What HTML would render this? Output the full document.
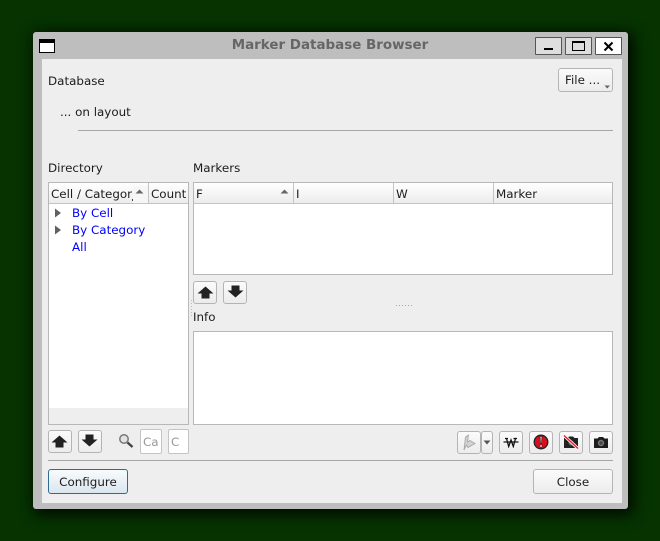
<!DOCTYPE html>
<html><head><meta charset="utf-8">
<style>
html,body{margin:0;padding:0;width:660px;height:541px;overflow:hidden;background:#063300}
*{box-sizing:border-box}
body{font-family:"DejaVu Sans",sans-serif;font-size:11.9px;color:#1c1c1c;position:relative}
.a{position:absolute;white-space:nowrap}
.win{position:absolute;left:33px;top:32px;width:595px;height:477px;background:#bebebe;border-radius:3px;box-shadow:3px 3px 14px 3px rgba(0,0,0,.75)}
.content{position:absolute;left:42px;top:59px;width:580px;height:444px;background:#eeeeee}
.btn{position:absolute;border:1px solid #b4b4b4;border-radius:3px;background:linear-gradient(#fbfbfb,#ececec);text-align:center}
.tb{position:absolute;top:4px;height:18px;border:1px solid #555;border-radius:1px}
.box{position:absolute;background:#fff;border:1px solid #b8b8b8}
.hd{position:absolute;top:0;height:21px;background:linear-gradient(#fff,#ececec);border-right:1px solid #c4c4c4;border-bottom:1px solid #c4c4c4;line-height:22px;padding-left:2px;overflow:hidden;white-space:nowrap}
.lnk{position:absolute;color:#0000ff;left:72px;line-height:17px;white-space:nowrap}
svg{position:absolute;display:block}
</style></head>
<body>
<div class="win"></div>
<div class="content"></div>

<div class="a" style="left:39px;top:39px;width:16px;height:14px;background:#fff;border:1px solid #000;border-top:4px solid #000"></div>
<div class="a" style="left:33px;top:37px;width:595px;text-align:center;font:bold 13.45px 'DejaVu Sans',sans-serif;color:#666;line-height:17px;text-indent:-1px">Marker Database Browser</div>
<div class="tb" style="left:535px;top:37px;width:27px;height:18px;background:#dedede"></div>
<div class="a" style="left:544px;top:48px;width:9px;height:2px;background:#000"></div>
<div class="tb" style="left:565px;top:37px;width:27px;height:18px;background:#dedede"></div>
<div class="a" style="left:572px;top:41px;width:13px;height:10px;border:1px solid #000;border-top:2px solid #000"></div>
<div class="tb" style="left:595px;top:37px;width:27px;height:18px;background:#fff"></div>
<svg style="left:603px;top:41px" width="11" height="11"><path d="M1.500 1.500L9.500 9.500M9.500 1.500L1.500 9.500" stroke="#000" stroke-width="2"/></svg>

<div class="a" style="left:48px;top:73px;line-height:16px">Database</div>
<div class="btn" style="left:558px;top:68px;width:55px;height:24px;line-height:23px;text-align:left;padding-left:6px">File ...</div>
<svg style="left:604px;top:85px" width="7" height="4"><path d="M0.500 0.500H6L3.200 3.500Z" fill="#666"/></svg>
<div class="a" style="left:60px;top:104px;line-height:16px">... on layout</div>
<div class="a" style="left:78px;top:130px;width:535px;height:1px;background:#a6a6a6"></div>

<div class="a" style="left:48px;top:160px;line-height:16px">Directory</div>
<div class="a" style="left:193px;top:160px;line-height:16px">Markers</div>

<div class="box" style="left:48px;top:182px;width:141px;height:243px">
  <div class="hd" style="left:0;width:100px">Cell / Categor</div>
  <div class="hd" style="left:100px;width:39px;border-right:0">Count</div>
  <div class="a" style="left:0;top:225px;width:139px;height:16px;background:#eeeeee"></div>
</div>
<div class="a" style="left:133px;top:186px;width:15px;height:17px;background:#f6f6f6"></div>
<div class="a" style="left:132px;top:199px;width:1px;height:2px;background:#444"></div>
<svg style="left:135px;top:189px" width="9" height="5"><path d="M0.500 4.500L4.500 0.500L8.500 4.500Z" fill="#666"/></svg>
<div class="a" style="left:148px;top:183px;width:1px;height:20px;background:#c4c4c4"></div>
<svg style="left:54px;top:208px" width="8" height="10"><path d="M1 .5L7 5L1 9.500Z" fill="#616161"/></svg>
<svg style="left:54px;top:225px" width="8" height="10"><path d="M1 .5L7 5L1 9.500Z" fill="#616161"/></svg>
<div class="lnk" style="top:205px">By Cell</div>
<div class="lnk" style="top:222px">By Category</div>
<div class="lnk" style="top:239px">All</div>

<div class="box" style="left:193px;top:182px;width:420px;height:93px">
  <div class="hd" style="left:0;width:100px">F</div>
  <div class="hd" style="left:100px;width:100px">I</div>
  <div class="hd" style="left:200px;width:100px">W</div>
  <div class="hd" style="left:300px;width:118px;border-right:0">Marker</div>
</div>
<svg style="left:280px;top:189px" width="9" height="5"><path d="M0.500 4.500L4.500 0.500L8.500 4.500Z" fill="#666"/></svg>

<div class="btn" style="left:193px;top:281px;width:24px;height:23px"></div>
<svg style="left:197px;top:286px" width="17" height="13"><path d="M8.500 0.500L16.500 7.500H12.500V12.500H4.500V7.500H0.500Z" fill="#222"/></svg>
<div class="btn" style="left:223px;top:281px;width:24px;height:23px"></div>
<svg style="left:227px;top:285px" width="17" height="13"><path d="M4.500 .5H12.500V5.500H16.500L8.500 12.500L0.500 5.500H4.500Z" fill="#222"/></svg>
<div class="a" style="left:396px;top:305px;width:16px;height:1px;background:repeating-linear-gradient(90deg,#aaa 0 1px,transparent 1px 3px)"></div>
<div class="a" style="left:191px;top:300px;width:1px;height:16px;background:repeating-linear-gradient(#bbb 0 1px,transparent 1px 3px)"></div>
<div class="a" style="left:193px;top:309px;line-height:16px">Info</div>
<div class="box" style="left:193px;top:331px;width:420px;height:94px"></div>

<div class="btn" style="left:48px;top:430px;width:24px;height:23px"></div>
<svg style="left:51px;top:435px" width="17" height="13"><path d="M8.500 0.500L16.500 7.500H12.500V12.500H4.500V7.500H0.500Z" fill="#222"/></svg>
<div class="btn" style="left:78px;top:430px;width:24px;height:23px"></div>
<svg style="left:81px;top:434px" width="17" height="13"><path d="M4.500 .5H12.500V5.500H16.500L8.500 12.500L0.500 5.500H4.500Z" fill="#222"/></svg>
<svg style="left:118px;top:433px" width="16" height="16"><circle cx="6" cy="6" r="4.200" fill="#e2e2e2" stroke="#777" stroke-width="1.500"/><path d="M9.500 9.500L14.500 14" stroke="#444" stroke-width="2.400"/></svg>
<div class="a" style="left:140px;top:429px;width:22px;height:25px;background:#fff;border:1px solid #c4c4c4;border-radius:2px;color:#999;line-height:24px;padding-left:2px;overflow:hidden">Ca</div>
<div class="a" style="left:168px;top:429px;width:21px;height:25px;background:#fff;border:1px solid #c4c4c4;border-radius:2px;color:#999;line-height:24px;padding-left:2px;overflow:hidden">C</div>

<div class="btn" style="left:457px;top:431px;width:24px;height:23px"></div>
<svg style="left:461px;top:434px" width="17" height="17"><path d="M3 16L4.500 3L7.500 1L6.500 8L9 6.500L14 9.500L10.500 11.500L7 13.500L5.500 11Z" fill="#d2d2d2" stroke="#a8a8a8" stroke-width=".9"/></svg>
<div class="btn" style="left:481px;top:431px;width:12px;height:23px"></div>
<svg style="left:483px;top:440px" width="8" height="5"><path d="M0.500 0.500H7.500L4 4.500Z" fill="#555"/></svg>
<div class="btn" style="left:499px;top:431px;width:24px;height:23px"></div>
<svg style="left:503px;top:437px" width="16" height="11"><path d="M2 1.500H5M10.500 1.500H14M3.500 1.500L5.700 9.500L8 3L10.300 9.500L12.500 1.500" fill="none" stroke="#111" stroke-width="1.300"/><path d="M0.500 5H15.500" stroke="#111" stroke-width="1.200"/></svg>
<div class="btn" style="left:529px;top:431px;width:24px;height:23px"></div>
<svg style="left:533px;top:434px" width="16" height="16"><circle cx="8" cy="8" r="6.800" fill="#d8101c" stroke="#222" stroke-width="1.300"/><path d="M7 2.500H9L8.500 9.500H7.500Z" fill="#eee" stroke="#111" stroke-width=".6"/><rect x="7" y="11" width="2" height="2" fill="#fff" stroke="#111" stroke-width=".4"/></svg>
<div class="btn" style="left:559px;top:431px;width:24px;height:23px"></div>
<svg style="left:563px;top:435px" width="16" height="15"><path d="M1 3H4.500L6 1.500H10L11.500 3H15V13H1Z" fill="#222"/><circle cx="8" cy="8" r="2.500" fill="#666"/><path d="M1 0.500L15 13.500" stroke="#fff" stroke-width="3"/><path d="M1 0.500L15 13.500" stroke="#ee2030" stroke-width="1.500"/></svg>
<div class="btn" style="left:589px;top:431px;width:24px;height:23px"></div>
<svg style="left:593px;top:436px" width="16" height="13"><path d="M1 2.500H4.500L6 1H10L11.500 2.500H15V12H1Z" fill="#1c1c1c"/><circle cx="8" cy="7" r="3.200" fill="#777"/><circle cx="8" cy="7" r="1.700" fill="#444"/></svg>

<div class="a" style="left:48px;top:460px;width:565px;height:1px;background:#a6a6a6"></div>
<div class="btn" style="left:48px;top:469px;width:80px;height:25px;line-height:24px;border-color:#2d6c94;background:linear-gradient(#f8fbfd,#dbe6ee)">Configure</div>
<div class="btn" style="left:533px;top:469px;width:80px;height:25px;line-height:24px">Close</div>
</body></html>
